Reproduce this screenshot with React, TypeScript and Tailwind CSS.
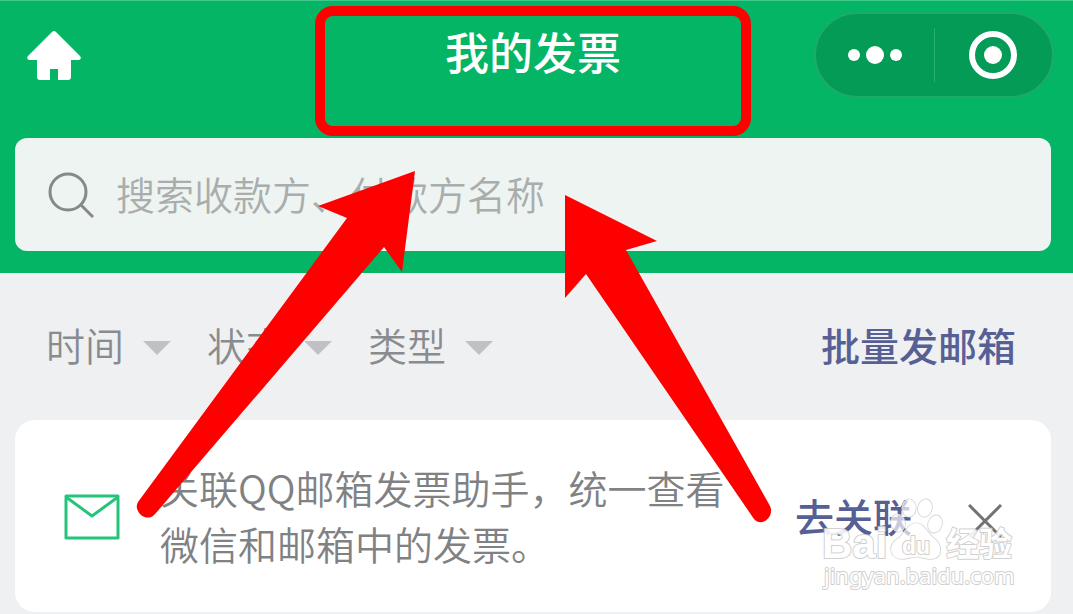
import React from 'react';

const filters = [
  { id: 'time', label: '时间' },
  { id: 'status', label: '状态' },
  { id: 'type', label: '类型' },
];

const HomeIcon = () => (
  <svg viewBox="0 0 54 49" className="w-[54px] h-[49px]" fill="white" aria-hidden="true">
    <path d="M25 1Q27-1 29 1L53 25Q55 28 52 29H44V46Q44 49 41 49H31V38H23V49H13Q10 49 10 46V29H2Q-1 28 1 25Z" />
  </svg>
);

const SearchIcon = () => (
  <svg viewBox="0 0 46 46" className="w-[46px] h-[46px] shrink-0" fill="none" stroke="#858a88" strokeWidth="3" aria-hidden="true">
    <circle cx="20" cy="20" r="18" />
    <path d="M32.5 32.5L45 45" />
  </svg>
);

const MailIcon = () => (
  <svg viewBox="0 0 56 46" className="w-14 h-[46px] shrink-0" fill="none" stroke="#25c47c" strokeWidth="3" strokeLinejoin="round" aria-hidden="true">
    <rect x="2" y="2" width="52" height="42" />
    <path d="M2 3L28 22L54 3" />
  </svg>
);

const Watermark = () => (
  <div className="absolute right-[29px] top-[76px] w-[200px] h-24 pointer-events-none select-none opacity-90">
    <svg viewBox="0 0 200 96" className="w-[200px] h-24" fill="white" stroke="#cccccc" strokeWidth="2" paintOrder="stroke" strokeLinejoin="round">
      <g fillOpacity="0.75" strokeWidth="1.2">
        <ellipse cx="76" cy="27" rx="7" ry="9" transform="rotate(-15 76 27)" />
        <ellipse cx="87" cy="12" rx="7" ry="9" />
        <ellipse cx="103" cy="12" rx="7" ry="9" transform="rotate(12 103 12)" />
        <ellipse cx="113" cy="28" rx="7" ry="9" transform="rotate(18 113 28)" />
        <path d="M94 27C85 27 83 38 75 43C66 49 67 61 78 63C84 64 88 61 94 61C100 61 105 64 111 63C121 61 121 49 112 42C105 37 103 27 94 27Z" />
      </g>
      <g fontFamily="'Liberation Sans', sans-serif" fontWeight="bold">
        <text x="0" y="62" fontSize="42">Bai</text>
        <text x="80" y="58" fontSize="23">du</text>
      </g>
      <text x="124" y="60" fontSize="33" fontWeight="bold" fontFamily="'Noto Sans CJK SC', sans-serif">经验</text>
      <text x="2" y="88" fontSize="22" fontFamily="'Noto Sans', sans-serif">jingyan.baidu.com</text>
    </svg>
  </div>
);

const Arrows = () => (
  <svg viewBox="0 0 640 356" className="absolute left-[134px] top-[169px] w-[640px] h-[356px] pointer-events-none" fill="#ff0000" aria-hidden="true">
    <path d="M281 2L184 37L213 49L4 333C-1 341 10 353 19 347L22 344L250 78L268 103Z" />
    <path d="M431 26L523 72L492 81L636 337C641 347 628 359 620 350L452 105L431 129Z" />
  </svg>
);

const App: React.FC = () => {
  return (
    <div className="relative min-h-screen overflow-hidden bg-[#eff0f2] font-['Noto_Sans_CJK_SC',sans-serif] text-[39px] leading-[56px]">
      <header className="bg-[#03b564] border-t border-[#40c98c] pt-[11px] pb-[22px]">
        <div className="grid grid-cols-[1fr_auto_1fr] items-center pl-3 pr-[19px]">
          <button aria-label="首页" className="justify-self-start px-[15px]">
            <HomeIcon />
          </button>
          <div className="relative h-[86px]">
            <h1 className="text-[44px] leading-[78px] font-medium text-white">我的发票</h1>
            <div className="absolute -left-[130px] -right-[130px] -top-[6px] h-[130px] rounded-[18px] border-[10px] border-[#ff0000] pointer-events-none" />
          </div>
          <div className="flex items-center justify-self-end w-60 h-[86px] rounded-full bg-[#039b56] border-2 border-[#1eaa69]">
            <button aria-label="更多" className="flex flex-1 items-center justify-center gap-[6px]">
              <span className="w-3 h-3 rounded-full bg-white" />
              <span className="w-[18px] h-[18px] rounded-full bg-white" />
              <span className="w-3 h-3 rounded-full bg-white" />
            </button>
            <span className="w-px h-[54px] bg-[#27ad6e]" />
            <button aria-label="关闭小程序" className="flex flex-1 items-center justify-center">
              <span className="flex items-center justify-center w-12 h-12 rounded-full border-[6px] border-white">
                <span className="w-[18px] h-[18px] rounded-full bg-white" />
              </span>
            </button>
          </div>
        </div>

        <label className="flex items-center gap-[22px] mt-10 ml-[15px] mr-[22px] h-[113px] pl-[33px] pr-6 rounded-xl bg-[#eef4f2]">
          <SearchIcon />
          <input
            type="search"
            aria-label="搜索"
            placeholder="搜索收款方、付款方名称"
            className="flex-1 min-w-0 h-[60px] pb-1 bg-transparent font-[350] text-[#777] placeholder:text-[#a9aeac] outline-none"
          />
        </label>
      </header>

      <div className="flex items-center justify-between pt-[43px] pb-12 pl-[46px] pr-[57px]">
        <div className="flex gap-9">
          {filters.map((f) => (
            <label key={f.id} className="flex items-center gap-[19px]">
              <select aria-label={f.label} className="appearance-none w-[78px] bg-transparent font-[350] text-[#8a8b8e] outline-none">
                <option>{f.label}</option>
              </select>
              <svg viewBox="0 0 28 14" className="w-7 h-[14px] mt-2 pointer-events-none" fill="#bfc1c4" aria-hidden="true">
                <path d="M0 0H28L14 14Z" />
              </svg>
            </label>
          ))}
        </div>
        <button className="font-medium text-[#576095]">批量发邮箱</button>
      </div>

      <section className="relative flex items-center ml-[15px] mr-[22px] pt-[39px] pb-[37px] pl-[49px] pr-[49px] rounded-[20px] bg-white">
        <MailIcon />
        <p className="flex-1 ml-10 pb-1 font-[350] text-[#808183]">
          关联QQ邮箱发票助手，统一查看
          <br />
          微信和邮箱中的发票。
        </p>
        <button className="pb-1 font-medium text-[#576095]">去关联</button>
        <button aria-label="关闭" className="ml-14 mt-2">
          <svg viewBox="0 0 34 34" className="w-[34px] h-[34px]" stroke="#737373" strokeWidth="3" aria-hidden="true">
            <path d="M1 1L33 33M33 1L1 33" />
          </svg>
        </button>
        <Watermark />
      </section>

      <Arrows />
    </div>
  );
};

export default App;
